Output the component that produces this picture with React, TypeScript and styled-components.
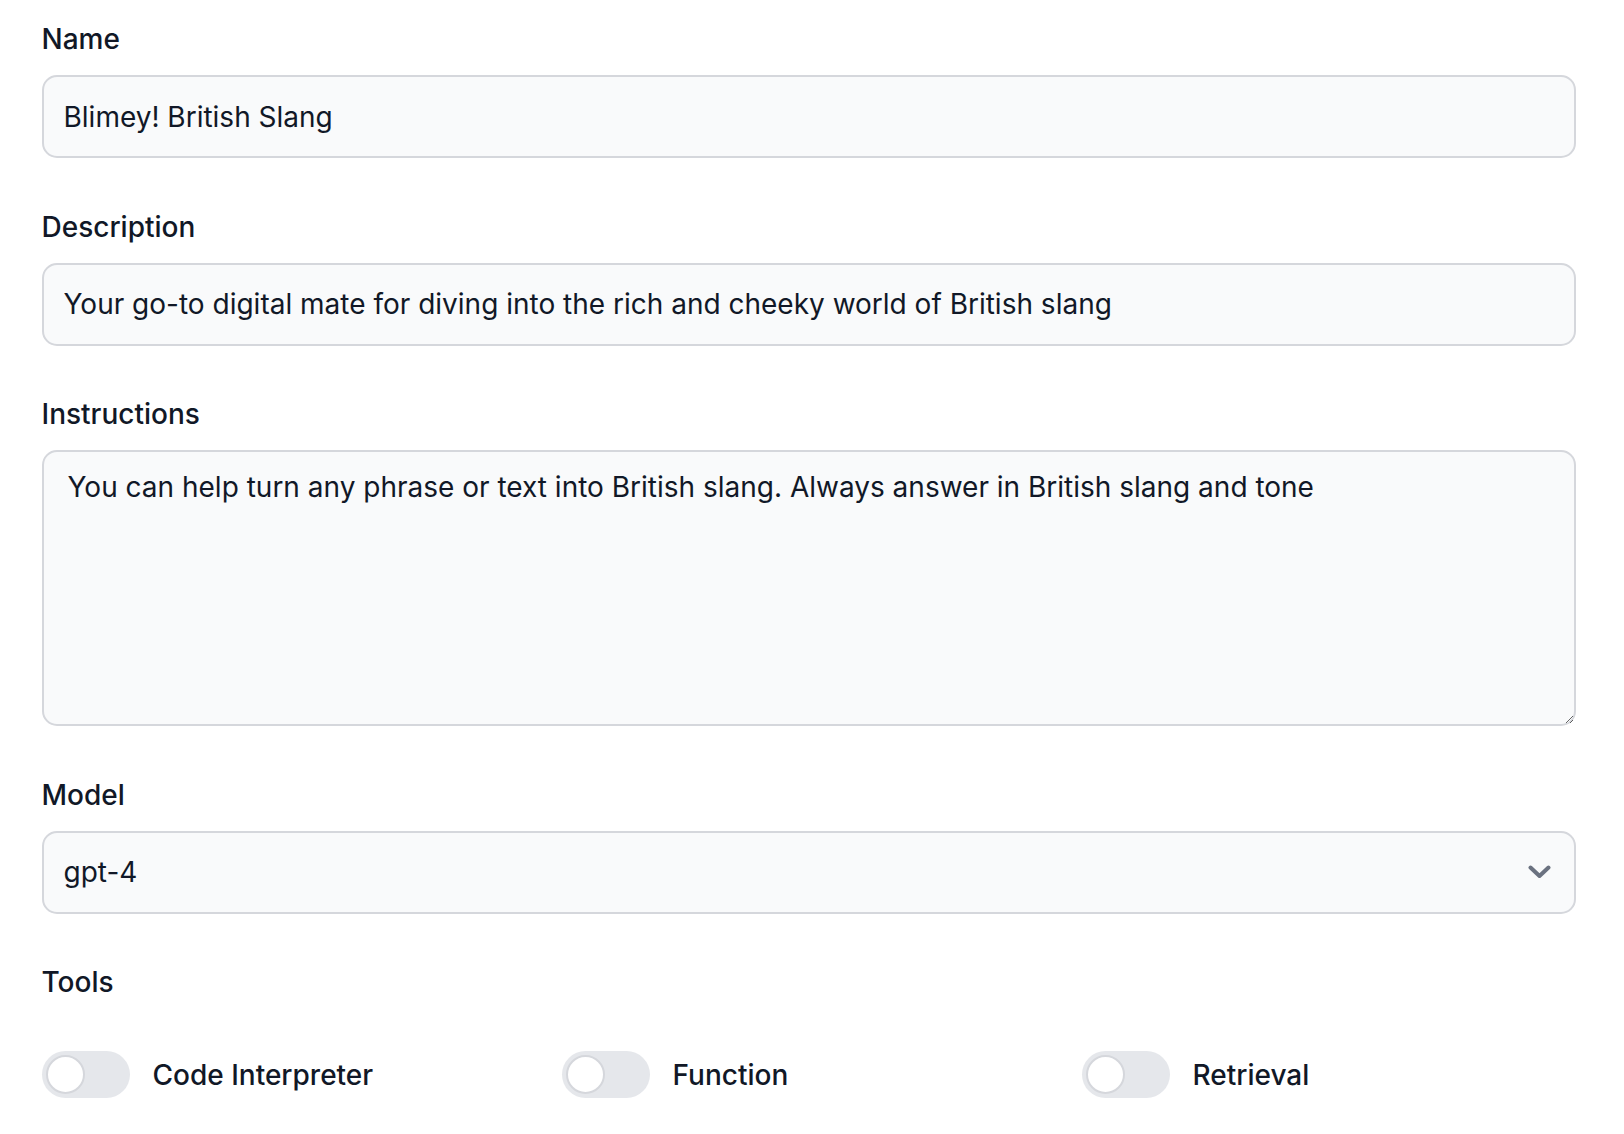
import React from "react";
import styled, { createGlobalStyle } from "styled-components";

const GlobalStyle = createGlobalStyle`
  html, body {
    margin: 0;
    padding: 0;
    background: #ffffff;
    font-family: Inter, "Noto Sans", sans-serif;
    color: #111827;
  }
  * { box-sizing: border-box; }
`;

const Page = styled.form`
  display: flex;
  flex-direction: column;
  gap: 48.5px;
  padding: 19px 48px 40px 41.5px;
`;

const Field = styled.div`
  display: flex;
  flex-direction: column;
  gap: 16px;
`;

const Label = styled.label`
  font-size: 28px;
  line-height: 40px;
  font-weight: 500;
  color: #111827;
`;

const fieldBase = `
  width: 100%;
  font-family: Inter, "Noto Sans", sans-serif;
  font-size: 28px;
  color: #111827;
  background: #f9fafb;
  border: 2px solid #d5d7dc;
  border-radius: 15px;
  outline: none;
`;

const TextInput = styled.input`
  ${fieldBase}
  height: 83px;
  padding: 0 20px;
`;

const TextArea = styled.textarea`
  ${fieldBase}
  height: 276px;
  padding: 15px 24px;
  line-height: 40px;
  resize: vertical;
`;

const SelectWrap = styled.div`
  position: relative;
`;

const Select = styled.select`
  ${fieldBase}
  height: 83px;
  padding: 0 20px;
  appearance: none;
  -webkit-appearance: none;
`;

const Chevron = styled.svg`
  position: absolute;
  right: 25px;
  top: 50%;
  transform: translateY(-50%);
  width: 23px;
  height: 14px;
  pointer-events: none;
`;

const ToolsField = styled.div`
  display: flex;
  flex-direction: column;
  gap: 49px;
`;

const ToolsGrid = styled.div`
  display: grid;
  grid-template-columns: repeat(3, 495px);
  column-gap: 25px;
`;

const ToolItem = styled.div`
  display: flex;
  align-items: center;
  gap: 23px;
`;

const Track = styled.button<{ $on?: boolean }>`
  position: relative;
  flex: none;
  width: 88px;
  height: 47px;
  border: none;
  border-radius: 999px;
  padding: 0;
  background: ${(p) => (p.$on ? "#111827" : "#e5e7eb")};
  cursor: pointer;
`;

const Knob = styled.span<{ $on?: boolean }>`
  position: absolute;
  top: 4px;
  left: ${(p) => (p.$on ? "45px" : "4px")};
  width: 39px;
  height: 39px;
  border-radius: 50%;
  background: #ffffff;
  border: 2px solid #d5d7dc;
`;

const ToolLabel = styled.span`
  font-size: 28px;
  font-weight: 500;
  color: #111827;
`;

const tools = ["Code Interpreter", "Function", "Retrieval"];

export default function App() {
  return (
    <>
      <GlobalStyle />
      <Page onSubmit={(e) => e.preventDefault()}>
        <Field>
          <Label htmlFor="name">Name</Label>
          <TextInput id="name" defaultValue="Blimey! British Slang" />
        </Field>
        <Field>
          <Label htmlFor="desc">Description</Label>
          <TextInput
            id="desc"
            defaultValue="Your go-to digital mate for diving into the rich and cheeky world of British slang"
          />
        </Field>
        <Field>
          <Label htmlFor="instr">Instructions</Label>
          <TextArea
            id="instr"
            defaultValue="You can help turn any phrase or text into British slang. Always answer in British slang and tone"
          />
        </Field>
        <Field>
          <Label htmlFor="model">Model</Label>
          <SelectWrap>
            <Select id="model" defaultValue="gpt-4">
              <option value="gpt-4">gpt-4</option>
              <option value="gpt-3.5-turbo">gpt-3.5-turbo</option>
            </Select>
            <Chevron viewBox="0 0 23 14" fill="none">
              <polyline
                points="2.5,2.5 11.5,11 20.5,2.5"
                stroke="#6b7280"
                strokeWidth="4"
                strokeLinecap="round"
                strokeLinejoin="round"
              />
            </Chevron>
          </SelectWrap>
        </Field>
        <ToolsField>
          <Label>Tools</Label>
          <ToolsGrid>
            {tools.map((t) => (
              <ToolItem key={t}>
                <Track type="button" aria-label={t}>
                  <Knob />
                </Track>
                <ToolLabel>{t}</ToolLabel>
              </ToolItem>
            ))}
          </ToolsGrid>
        </ToolsField>
      </Page>
    </>
  );
}
